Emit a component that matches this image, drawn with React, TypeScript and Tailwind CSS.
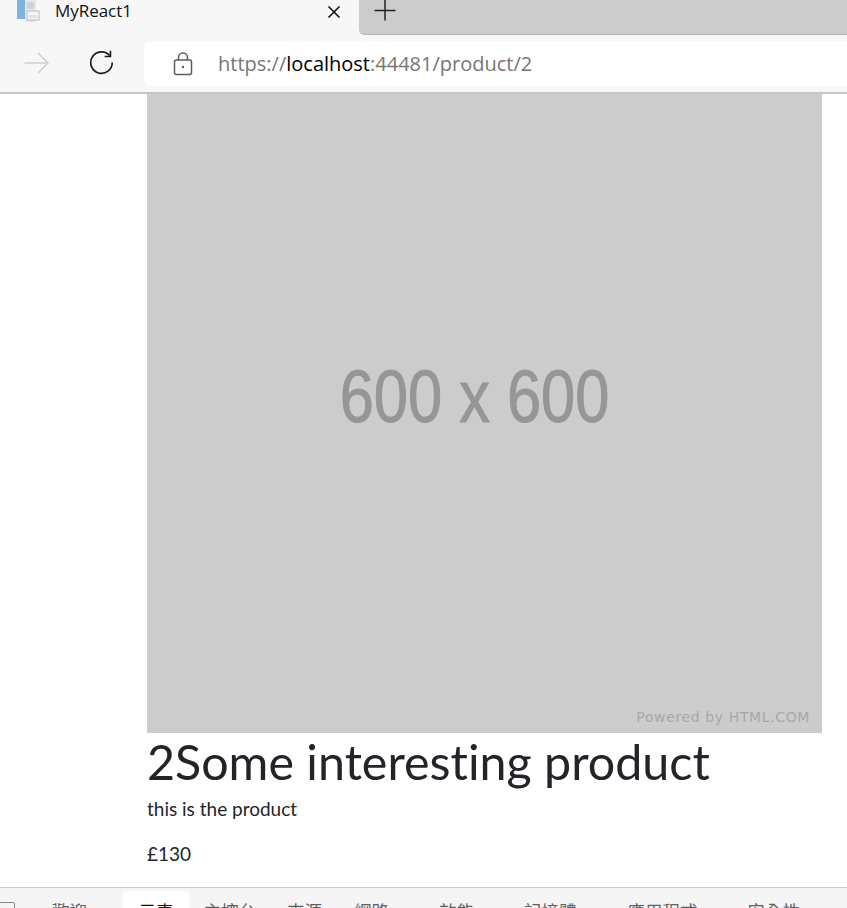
const devTabs = [
  { label: '歡迎', className: 'ml-[37px] text-[#5f5f5f]' },
  { label: '元素', className: 'ml-[35.5px] pl-[16px] pr-[15px] bg-white rounded-t-[3px] text-[#111]' },
  { label: '主控台', className: 'ml-[15px] text-[#5f5f5f]' },
  { label: '來源', className: 'ml-[31px] text-[#5f5f5f]' },
  { label: '網路', className: 'ml-[32px] text-[#5f5f5f]' },
  { label: '效能', className: 'ml-[50px] text-[#5f5f5f]' },
  { label: '記憶體', className: 'ml-[50px] text-[#5f5f5f]' },
  { label: '應用程式', className: 'ml-[51px] text-[#5f5f5f]' },
  { label: '安全性', className: 'ml-[50px] text-[#5f5f5f]' },
];

function BrowserBar() {
  return (
    <header className="shrink-0 bg-[#f7f7f7] border-b-2 border-[#c6c6c6] h-[94px] font-['Open_Sans',sans-serif]">
      <div className="flex h-[35px] overflow-hidden">
        <div className="w-[359px] shrink-0 flex items-start relative">
          <svg className="ml-[17px] shrink-0" width="23" height="23" viewBox="0 0 23 23">
            <rect x="0" y="0" width="8" height="19" fill="#7fb2de" />
            <rect x="8" y="0" width="11" height="22" fill="#e4e6ea" />
            <rect x="10" y="2" width="7" height="7" fill="#cfd3d9" />
            <rect x="10" y="11" width="12" height="9" fill="#f3f5f7" stroke="#b8bec6" />
            <rect x="12" y="15" width="8" height="3" fill="#d6e4f0" />
          </svg>
          <span className="ml-[15px] text-[17px] leading-[22px] tracking-[-0.05px] text-[#111]">MyReact1</span>
          <svg className="absolute left-[327px] top-[5px]" width="14" height="14" viewBox="0 0 14 14" fill="none" stroke="#111" strokeWidth="1.6">
            <path d="M1.5 1.5 12.5 12.5M12.5 1.5 1.5 12.5" />
          </svg>
        </div>
        <div className="flex-1 bg-[#cccccc] rounded-bl-[6px] border-b border-[#b4b4b4] pl-[15px]">
          <svg width="22" height="21" viewBox="0 0 22 21" fill="none" stroke="#222" strokeWidth="1.5">
            <path d="M11 0V20.5M0.5 10.5H21.5" />
          </svg>
        </div>
      </div>
      <div className="flex items-center h-[57px]">
        <svg className="ml-[24px] mb-[2px] shrink-0" width="25" height="22" viewBox="0 0 25 22" fill="none" stroke="#cfcfcf" strokeWidth="1.5">
          <path d="M0.5 11H24M14 1l10 10-10 10" />
        </svg>
        <svg className="ml-[40px] mb-[2px] shrink-0" width="25" height="25" viewBox="0 0 26 26" fill="none" stroke="#1a1a1a" strokeWidth="1.7">
          <path d="M21.5 5.8A11.2 11.2 0 1 0 24.2 13" />
          <path d="M22.3 0.8V6.8H16.3" />
        </svg>
        <div className="ml-[30px] flex-1 h-[45px] bg-white rounded-l-[7px] flex items-center">
          <svg className="ml-[29px] shrink-0" width="20" height="24" viewBox="0 0 20 24" fill="none" stroke="#5c5c5c" strokeWidth="1.5">
            <rect x="1.5" y="8" width="17" height="14.5" rx="2" />
            <path d="M5.5 8V5.5a4.5 4.5 0 0 1 9 0V8" />
            <circle cx="10" cy="15" r="1.2" fill="#5c5c5c" stroke="none" />
          </svg>
          <span className="ml-[25px] text-[20px] text-[#767676]">
            https://<span className="text-black">localhost</span>:44481/product/2
          </span>
        </div>
      </div>
    </header>
  );
}

function PlaceholderImage() {
  return (
    <div className="relative w-[675px] h-[639px] bg-[#cccccc] flex items-center justify-center pb-[33px] pr-[19px]">
      <span className="font-['Liberation_Sans',sans-serif] text-[74px] leading-none text-[#969696] scale-x-[0.83] whitespace-nowrap blur-[0.4px] [-webkit-text-stroke:1px_#969696]">
        600 x 600
      </span>
      <span className="absolute right-[12px] bottom-[7px] font-['DejaVu_Sans',sans-serif] text-[14px] leading-[18px] text-[#a8a8a8] tracking-[0.62px]">
        Powered by HTML.COM
      </span>
    </div>
  );
}

export default function App() {
  return (
    <div className="h-[908px] w-[847px] flex flex-col overflow-hidden bg-white">
      <BrowserBar />
      <main className="flex-1 pl-[147px] text-[#212529] font-['Lato',sans-serif] [font-variant-ligatures:none]">
        <PlaceholderImage />
        <h1 className="text-[48.4px] leading-[56px] font-normal whitespace-nowrap">2Some interesting product</h1>
        <p className="text-[19px] leading-[27px] font-normal mt-[6px]">this is the product</p>
        <p className="text-[19px] leading-[27px] font-normal mt-[18px]">£130</p>
      </main>
      <footer className="shrink-0 h-[21px] bg-[#f5f5f5] border-t border-[#cccccc] overflow-hidden pt-[3px] font-['Noto_Sans_CJK_TC',sans-serif] flex">
        <div className="shrink-0 -ml-[3px] mt-[11px] w-[18px] h-[14px] border border-[#888] rounded-[2px]" />
        {devTabs.map((tab) => (
          <div key={tab.label} className={`text-[17.5px] leading-[40px] h-[40px] whitespace-nowrap ${tab.className}`}>
            {tab.label}
          </div>
        ))}
      </footer>
    </div>
  );
}
